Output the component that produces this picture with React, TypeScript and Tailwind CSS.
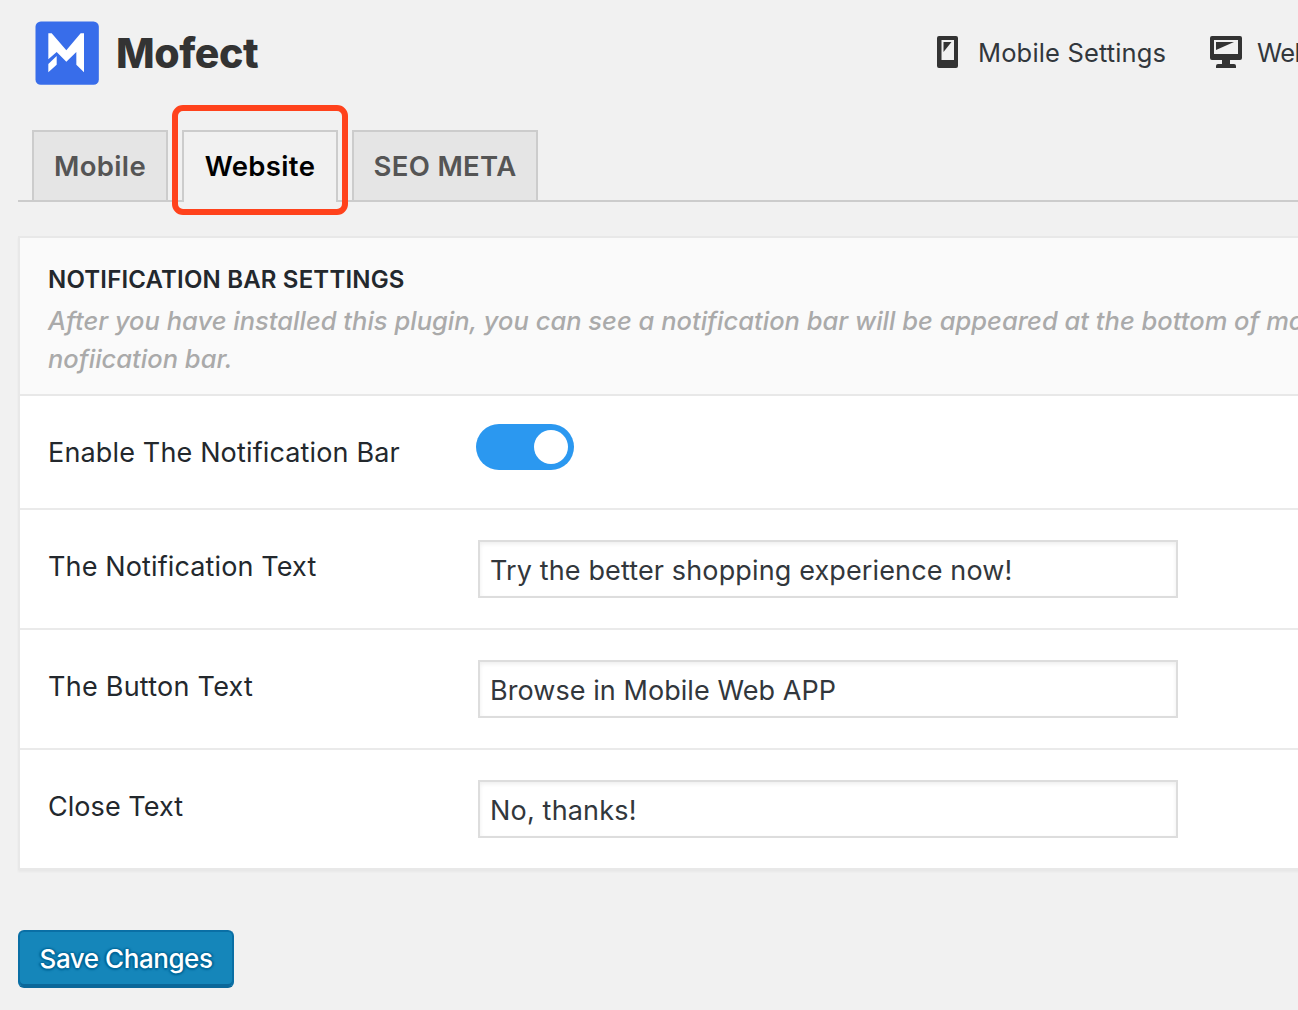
import React from "react";

const fields = [
  { label: "The Notification Text", value: "Try the better shopping experience now!", labelSpacing: "tracking-[0.13px]", spacing: "tracking-[0.13px]" },
  { label: "The Button Text", value: "Browse in Mobile Web APP", labelSpacing: "tracking-[0.25px]", spacing: "tracking-[0.06px]" },
  { label: "Close Text", value: "No, thanks!", labelSpacing: "tracking-[0.05px]", spacing: "tracking-[0.18px]" },
];

function Logo() {
  return (
    <svg className="h-16 w-16 shrink-0" viewBox="0 0 192 192">
      <rect x="1.5" y="1.5" width="190" height="190" rx="16" fill="#386dea" />
      <path fill="#fff" d="M40 37H50L94 88L137 37H147V154L124 131V93L94 122L65 93L40 115Z" />
      <path fill="#fff" d="M40 129L65 105V131L40 154Z" />
    </svg>
  );
}

function PhoneIcon() {
  return (
    <svg className="h-8 w-[21px] shrink-0" viewBox="0 0 21 32" fill="#333">
      <path fillRule="evenodd" d="M2 0H19Q21 0 21 2V30Q21 32 19 32H2Q0 32 0 30V2Q0 0 2 0ZM4.5 4V24H17V4Z" />
      <path d="M6.5 6H14.5L6.5 16Z" />
    </svg>
  );
}

function MonitorIcon() {
  return (
    <svg className="h-8 w-8 shrink-0" viewBox="0 0 32 32" fill="#333">
      <path fillRule="evenodd" d="M2 0H30Q32 0 32 2V22Q32 24 30 24H20V28H24Q26 28 26 30V32H6V30Q6 28 8 28H12V24H2Q0 24 0 22V2Q0 0 2 0ZM4 4V18H28V4Z" />
      <path d="M6 6H24L6 14Z" />
    </svg>
  );
}

export default function App() {
  return (
    <div className="h-[1010px] w-[1298px] overflow-hidden whitespace-nowrap bg-[#f1f1f1] font-['Inter',sans-serif]">
      <header className="flex h-[130px] items-start pl-[35px] pt-[21px]">
        <Logo />
        <span className="ml-[17px] w-[821px] shrink-0 text-[41px] font-extrabold leading-[64px] tracking-[-0.45px] text-[#333]">Mofect</span>
        <div className="mt-[15px] flex h-8 shrink-0 items-center">
          <PhoneIcon />
          <span className="ml-5 mt-0.5 w-[188px] text-[25.5px] tracking-[0.15px] text-[#32373c]">Mobile Settings</span>
        </div>
        <div className="ml-11 mt-[15px] flex h-8 shrink-0 items-center">
          <MonitorIcon />
          <span className="ml-[15px] mt-0.5 text-[25.5px] tracking-[-0.6px] text-[#32373c]">Website</span>
        </div>
      </header>

      <nav className="ml-[18px] flex h-[72px] border-b-2 border-[#ccc] pl-[14px] text-[27.5px] font-semibold tracking-[0.35px] text-[#555]">
        <a className="flex h-[70px] w-[136px] items-center justify-center border-2 border-b-0 border-[#ccc] bg-[#e5e5e5] pt-0.5">Mobile</a>
        <a className="relative ml-[14px] flex h-[72px] w-[156px] items-center justify-center border-2 border-b-0 border-[#ccc] bg-[#f1f1f1] text-black">
          Website
          <span className="absolute -left-3 -top-[27.5px] h-[110px] w-[176px] rounded-[11px] border-[6px] border-[#ff421c]" />
        </a>
        <a className="ml-[14px] flex h-[70px] w-[186px] items-center justify-center border-2 border-b-0 border-[#ccc] bg-[#e5e5e5] pt-0.5">SEO META</a>
      </nav>

      <main className="ml-[18px] mt-[34px] w-[1400px] border-2 border-[#e8e8e8] bg-white shadow-[0_2px_2px_rgba(0,0,0,0.04)]">
        <section className="h-[158px] border-b-2 border-[#e8e8e8] bg-[#fafafa] pl-7 pt-[23px]">
          <h2 className="text-[24px] font-semibold leading-[38px] tracking-[0.18px] text-[#23282d]">NOTIFICATION BAR SETTINGS</h2>
          <p className="mt-[3px] text-[25.5px] font-medium italic leading-[38px] tracking-[0.01px] text-[#aaa]">
            After you have installed this plugin, you can see a notification bar will be appeared at the bottom of mobile<br />
            nofiication bar.
          </p>
        </section>
        <div className="flex h-[114px] border-b-2 border-[#eaeaea] pl-7 text-[27px] leading-[38px] text-[#23282d]">
          <span className="mt-[38px] w-[428px] tracking-[0.15px]">Enable The Notification Bar</span>
          <button className="mt-7 flex h-[46px] w-[98px] items-center justify-end rounded-full bg-[#2b98f0] pr-1.5">
            <span className="h-[34px] w-[34px] rounded-full bg-white" />
          </button>
        </div>
        {fields.map((f, i) => (
          <div key={f.label} className={"flex pl-7 text-[27px] leading-[38px] text-[#23282d] " + (i < 2 ? "h-[120px] border-b-2 border-[#eaeaea]" : "h-[118px]")}>
            <span className={"mt-[38px] w-[430px] " + f.labelSpacing}>{f.label}</span>
            <div className={"mt-[30px] flex h-[58px] w-[700px] items-center border-2 border-[#ddd] pl-[10px] pt-1 text-[#32373c] shadow-[inset_0_2px_4px_rgba(0,0,0,0.07)] " + f.spacing}>{f.value}</div>
          </div>
        ))}
      </main>

      <button className="ml-[18px] mt-[60px] flex h-[58px] w-[216px] items-center justify-center rounded-md border-2 border-[#0a6fa5] border-b-[#0b6799] bg-[#1586ba] pb-0.5 text-[26px] font-medium tracking-[-0.45px] text-white shadow-[inset_0_-2px_0_#0b6799] [text-shadow:0_-1px_2px_#006799,2px_0_2px_#006799,0_2px_2px_#006799,-2px_0_2px_#006799]">Save Changes</button>
    </div>
  );
}
